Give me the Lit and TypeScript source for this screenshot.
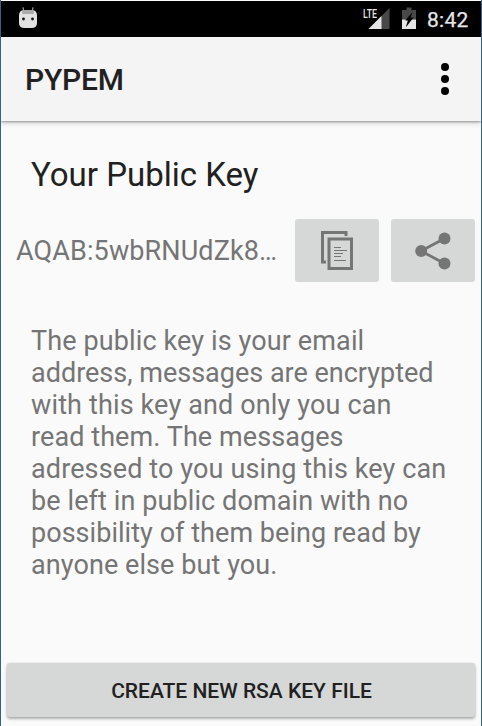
import { LitElement, html, css } from "lit";
import { customElement } from "lit/decorators.js";

// Each line carries its own tracking, in pixels.
const DESCRIPTION = [
  { text: "The public key is your email", tracking: 0.12 },
  { text: "address, messages are encrypted", tracking: 0 },
  { text: "with this key and only you can", tracking: 0.14 },
  { text: "read them. The messages", tracking: 0.08 },
  { text: "adressed to you using this key can", tracking: 0.12 },
  { text: "be left in public domain with no", tracking: 0.1 },
  { text: "possibility of them being read by", tracking: 0.04 },
  { text: "anyone else but you.", tracking: 0.08 },
];

@customElement("status-bar")
class StatusBar extends LitElement {
  static styles = css`
    :host {
      display: flex;
      align-items: flex-start;
      height: 36px;
      background: #000;
      color: #e6e6e6;
    }
    svg { display: block; flex: none; }
    .debug { margin: 5px 0 0 17px; }
    .signal { margin: 5px 0 0 auto; }
    .battery { margin: 6px 0 0 12px; }
    .clock {
      width: 43px;
      margin: 7px 11px 0 11px;
      font-size: 21px;
      line-height: 25px;
      font-weight: 400;
      letter-spacing: 0.3px;
      white-space: nowrap;
      -webkit-text-stroke: 0.25px #e6e6e6;
    }
    .lte { font: 500 12px "Roboto", sans-serif; }
  `;
  render() {
    return html`
      <svg class="debug" width="20" height="23" viewBox="0 0 20 23">
        <path d="M5.7 5.5 5 1.300M14.300 5.500l.7-4.200" stroke="#b0b0b0" stroke-width="1.100" />
        <path d="M1 9.500Q1 4.300 6 4.200h8Q19 4.300 19 9.500V17q0 5-5.500 5h-7Q1 22 1 17z" fill="#e2e2e2" />
        <path d="M4 5Q5 4 6 4h8q1 0 2 1L15.500 8h-11z" fill="#aaa" />
        <circle cx="5.500" cy="13" r="1.400" fill="#111" />
        <circle cx="14.500" cy="13" r="1.400" fill="#111" />
      </svg>
      <svg class="signal" width="27" height="24" viewBox="0 0 27 24">
        <path d="M26.500 2v21H5.500z" fill="#484848" />
        <path d="M18.500 10v13H5.500z" fill="#e6e6e6" />
        <text class="lte" x="0" y="11.500" fill="#e6e6e6" textLength="14" lengthAdjust="spacingAndGlyphs">LTE</text>
      </svg>
      <svg class="battery" width="14" height="23" viewBox="0 0 14 23">
        <path d="M0 3h4.500V.5h5V3H14v9.500H0z" fill="#484848" />
        <path d="M0 12.500h14V22H0z" fill="#e6e6e6" />
        <path d="M10.500 5 3.200 13.500h2.600L3.800 20.500 11.500 10.500H8.500z" fill="#000" />
      </svg>
      <span class="clock">8:42</span>
    `;
  }
}

@customElement("app-bar")
class AppBar extends LitElement {
  static styles = css`
    :host {
      display: flex;
      align-items: center;
      justify-content: space-between;
      height: 84px;
      padding: 0 32px 0 24px;
      box-sizing: border-box;
      background: #f4f4f4;
      box-shadow: 0 1px 2px rgba(0, 0, 0, 0.34), 0 3px 5px rgba(0, 0, 0, 0.12);
      color: #212121;
    }
    .title {
      padding-top: 2px;
      font-size: 30px;
      line-height: 36px;
      font-weight: 500;
      letter-spacing: -0.2px;
    }
    svg { display: block; }
  `;
  render() {
    return html`
      <span class="title">PYPEM</span>
      <svg width="8" height="32" viewBox="0 0 8 32">
        <circle cx="4" cy="4" r="4" /><circle cx="4" cy="16" r="4" /><circle cx="4" cy="28" r="4" />
      </svg>
    `;
  }
}

@customElement("app-root")
class AppRoot extends LitElement {
  static styles = css`
    :host {
      display: flex;
      flex-direction: column;
      box-sizing: border-box;
      height: 726px;
      padding-top: 1px;
      border: solid #34628f;
      border-width: 0 1px;
      overflow: hidden;
      background: #fafafa;
      font-family: "Roboto", sans-serif;
      color: #757575;
    }
    status-bar, app-bar { flex: none; }
    main { display: flex; flex-direction: column; flex: 1; }
    h1 {
      margin: 34px 0 0 30px;
      font-size: 33px;
      line-height: 39px;
      font-weight: 400;
      color: #212121;
    }
    .key-row {
      display: flex;
      align-items: center;
      gap: 12px;
      margin: 25px 6px 0 15px;
      height: 63px;
    }
    .key {
      flex: 1;
      font-size: 27px;
      line-height: 32px;
      letter-spacing: 0.12px;
      white-space: nowrap;
    }
    button {
      display: flex;
      align-items: center;
      justify-content: center;
      padding: 0;
      border: 0;
      border-radius: 3px;
      background: #d6d7d7;
      font-family: inherit;
    }
    .icon-button { flex: none; width: 84px; height: 63px; }
    .description { margin: 43px 0 0 30px; font-size: 27px; line-height: 32px; white-space: nowrap; }
    .line { display: block; }
    .create {
      margin: auto 6px 9px 6px;
      height: 54px;
      padding: 2px 0 0 1px;
      color: #212121;
      font-size: 21px;
      line-height: 25px;
      font-weight: 500;
      box-shadow: 0 2px 3px rgba(0, 0, 0, 0.3), 0 0 2px rgba(0, 0, 0, 0.12);
    }
  `;
  render() {
    return html`
      <status-bar></status-bar>
      <app-bar></app-bar>
      <main>
        <h1>Your Public Key</h1>
        <div class="key-row">
          <span class="key">AQAB:5wbRNUdZk8…</span>
          <button class="icon-button" aria-label="Copy">
            <svg width="32" height="39" viewBox="0 0 32 39">
              <path d="M25 5V1.500H1.500v29.500H5" fill="none" stroke="#757575" stroke-width="3" />
              <path d="M8 8h22.500v29.500H8z" fill="none" stroke="#757575" stroke-width="3" />
              <path d="M13 16.500h7M13 19.500h13M13 22.500h9M13 25.500h7M13 29.500h12" stroke="#757575" stroke-width="1" />
            </svg>
          </button>
          <button class="icon-button" aria-label="Share">
            <svg width="36" height="38" viewBox="0 0 36 38">
              <path d="M29.500 6.500 6 19l23.500 12.500" fill="none" stroke="#757575" stroke-width="2.800" />
              <circle cx="29.500" cy="6.500" r="6" fill="#757575" />
              <circle cx="6.200" cy="19" r="6" fill="#757575" />
              <circle cx="29.500" cy="31.500" r="6" fill="#757575" />
            </svg>
          </button>
        </div>
        <div class="description">
          ${DESCRIPTION.map(
            ({ text, tracking }) => html`<span class="line" style="letter-spacing:${tracking}px">${text}</span>`
          )}
        </div>
        <button class="create">CREATE NEW RSA KEY FILE</button>
      </main>
    `;
  }
}
